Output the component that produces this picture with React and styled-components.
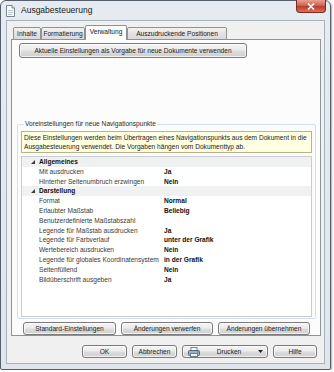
import React from 'react'
import styled, { createGlobalStyle } from 'styled-components'

const GlobalStyle = createGlobalStyle`
  html, body {
    margin: 0;
    padding: 0;
    background: #ffffff;
  }
  body {
    font-family: "Liberation Sans", Arial, sans-serif;
    color: #1b1b1b;
  }
`

const Window = styled.div`
  width: 331px;
  height: 370px;
  box-sizing: border-box;
  border: 1px solid #56606c;
  border-radius: 6px 6px 2px 2px;
  background: linear-gradient(#e6ebf1, #dfe5eb);
  display: flex;
  flex-direction: column;
  box-shadow: 1px 1px 2px rgba(0, 0, 0, 0.35);
`

const TitleBar = styled.div`
  height: 19px;
  flex: none;
  display: flex;
  align-items: flex-start;
`

const AppIcon = styled.svg`
  margin: 4px 0 0 4px;
  flex: none;
`

const Title = styled.div`
  margin: 4px 0 0 5px;
  font-size: 8.5px;
  line-height: 11px;
  color: #1a1a1a;
  flex: 1;
`

const CloseButton = styled.div`
  width: 30px;
  height: 13px;
  margin: -1px 4px 0 0;
  box-sizing: border-box;
  border: 1px solid #7a2a22;
  border-top: none;
  border-radius: 0 0 4px 4px;
  background: linear-gradient(#e6a294, #cf5a4a 50%, #b93a2b 51%, #d9705c);
  display: flex;
  align-items: center;
  justify-content: center;
`

const Client = styled.div`
  flex: 1;
  margin: 0 5px 5px;
  border: 1px solid #a8b2bd;
  background: #f0f0f0;
  display: flex;
  flex-direction: column;
  padding: 4px 3px 0 4px;
`

const TabStrip = styled.div`
  display: flex;
  align-items: flex-end;
  height: 14px;
  padding-left: 2px;
  position: relative;
  z-index: 1;
`

const Tab = styled.div`
  width: ${p => p.$w}px;
  height: ${p => (p.$active ? 15 : 13)}px;
  box-sizing: border-box;
  margin-bottom: -1px;
  border: 1px solid #8e939b;
  border-bottom: ${p => (p.$active ? 'none' : '1px solid #8e939b')};
  border-radius: 2px 2px 0 0;
  background: ${p => (p.$active ? '#fcfcfc' : 'linear-gradient(#f3f3f3, #e3e3e3 50%, #d9d9d9)')};
  font-size: 6.6px;
  line-height: 11px;
  text-align: center;
  white-space: nowrap;
  color: #1b1b1b;
`

const Panel = styled.div`
  height: 297px;
  flex: none;
  box-sizing: border-box;
  border: 1px solid #8e939b;
  background: #fcfcfc;
  display: flex;
  flex-direction: column;
  padding-top: 3px;
`

const Button = styled.div`
  width: ${p => p.$w}px;
  height: ${p => p.$h || 13}px;
  box-sizing: border-box;
  border: 1px solid #7b7b7b;
  border-radius: 3px;
  background: linear-gradient(#f4f4f4, #ebebeb 48%, #dddddd 52%, #cfcfcf);
  box-shadow: inset 0 0 0 1px rgba(255, 255, 255, 0.7);
  font-size: 6.6px;
  line-height: ${p => (p.$h || 13) - 2}px;
  text-align: center;
  white-space: nowrap;
  color: #1b1b1b;
  flex: none;
`

const TopButton = styled(Button)`
  margin-left: 7px;
`

const Group = styled.fieldset`
  margin: 62px 4px 0 5px;
  padding: 0 3px 1px;
  border: 1px solid #d5dfe5;
  border-radius: 2px;
  min-width: 0;
`

const GroupLabel = styled.legend`
  margin-left: 3px;
  padding: 0 1px;
  font-size: 6.6px;
  line-height: 8px;
  color: #2a2a2a;
`

const InfoBox = styled.div`
  margin-top: 3px;
  border: 1px solid #b9b38a;
  background: #ffffe1;
  padding: 1px 2px;
  font-size: 6.6px;
  line-height: 9px;
  color: #1b1b1b;
  white-space: nowrap;
`

const Grid = styled.div`
  margin-top: 3px;
  height: 161px;
  box-sizing: border-box;
  border: 1px solid #c9ccd1;
  background: #ffffff;
`

const Row = styled.div`
  display: grid;
  grid-template-columns: 17px 125px 1fr;
  height: 9.8px;
  align-items: center;
  background: ${p => (p.$cat ? '#f0f1f3' : 'transparent')};
  font-size: 6.6px;
  line-height: 9.8px;
  white-space: nowrap;
`

const Expander = styled.svg`
  justify-self: end;
  margin-right: 4px;
`

const Name = styled.span`
  font-weight: ${p => (p.$cat ? 700 : 400)};
  color: ${p => (p.$cat ? '#111' : '#3a3a3a')};
`

const Value = styled.span`
  font-weight: 700;
  color: #111;
`

const ActionRow = styled.div`
  display: flex;
  gap: 5px;
  margin: 3px 0 0 11px;
`

const Footer = styled.div`
  display: flex;
  gap: 5px;
  justify-content: flex-end;
  margin-top: 9px;
  padding-right: 4px;
`

const SplitButton = styled(Button)`
  display: flex;
  align-items: center;
  padding: 0 4px 0 5px;
`

const SplitLabel = styled.span`
  flex: 1;
  text-align: center;
`

const tabs = [
  { label: 'Inhalte', w: 28 },
  { label: 'Formatierung', w: 44 },
  { label: 'Verwaltung', w: 42, active: true },
  { label: 'Auszudruckende Positionen', w: 100 },
]

const rows = [
  { cat: true, name: 'Allgemeines' },
  { name: 'Mit ausdrucken', value: 'Ja' },
  { name: 'Hinterher Seitenumbruch erzwingen', value: 'Nein' },
  { cat: true, name: 'Darstellung' },
  { name: 'Format', value: 'Normal' },
  { name: 'Erlaubter Maßstab', value: 'Beliebig' },
  { name: 'Benutzerdefinierte Maßstabszahl', value: '' },
  { name: 'Legende für Maßstab ausdrucken', value: 'Ja' },
  { name: 'Legende für Farbverlauf', value: 'unter der Grafik' },
  { name: 'Wertebereich ausdrucken', value: 'Nein' },
  { name: 'Legende für globales Koordinatensystem', value: 'in der Grafik' },
  { name: 'Seitenfüllend', value: 'Nein' },
  { name: 'Bildüberschrift ausgeben', value: 'Ja' },
]

const DocIcon = () => (
  <AppIcon width="11" height="12" viewBox="0 0 11 12">
    <path d="M1.5 0.5 H7 L9.5 3 V11.5 H1.5 Z" fill="#fdfdfd" stroke="#7d8590" />
    <path d="M7 0.5 V3 H9.5" fill="#e3e6ea" stroke="#7d8590" />
    <path d="M3 5.5 H8 M3 7.5 H8 M3 9.5 H7" stroke="#b7c3d1" />
  </AppIcon>
)

const PrinterIcon = () => (
  <svg width="12" height="10" viewBox="0 0 12 10">
    <rect x="3" y="0.5" width="6" height="4" fill="#ffffff" stroke="#7a8794" />
    <rect x="0.5" y="3.5" width="11" height="5" rx="1" fill="#9fb1c6" stroke="#56687e" />
    <rect x="2.5" y="6.5" width="7" height="3" fill="#f4f6f8" stroke="#6f7e8f" />
    <rect x="9" y="4.5" width="1.5" height="1" fill="#3c9a3c" />
  </svg>
)

export default function App() {
  return (
    <>
      <GlobalStyle />
      <Window>
        <TitleBar>
          <DocIcon />
          <Title>Ausgabesteuerung</Title>
          <CloseButton>
            <svg width="8" height="7" viewBox="0 0 8 7">
              <path d="M1 0.5 L7 6.5 M7 0.5 L1 6.5" stroke="#ffffff" strokeWidth="1.6" />
            </svg>
          </CloseButton>
        </TitleBar>
        <Client>
          <TabStrip>
            {tabs.map(t => (
              <Tab key={t.label} $w={t.w} $active={t.active}>
                {t.label}
              </Tab>
            ))}
          </TabStrip>
          <Panel>
            <TopButton $w={228} $h={15}>
              Aktuelle Einstellungen als Vorgabe für neue Dokumente verwenden
            </TopButton>
            <Group>
              <GroupLabel>Voreinstellungen für neue Navigationspunkte</GroupLabel>
              <InfoBox>
                Diese Einstellungen werden beim Übertragen eines Navigationspunkts aus dem Dokument in die
                <br />
                Ausgabesteuerung verwendet. Die Vorgaben hängen vom Dokumenttyp ab.
              </InfoBox>
              <Grid>
                {rows.map(r => (
                  <Row key={r.name} $cat={r.cat}>
                    {r.cat ? (
                      <Expander width="4" height="4" viewBox="0 0 4 4">
                        <polygon points="4,0 4,4 0,4" fill="#3c3c3c" />
                      </Expander>
                    ) : (
                      <span />
                    )}
                    <Name $cat={r.cat}>{r.name}</Name>
                    <Value>{r.value}</Value>
                  </Row>
                ))}
              </Grid>
            </Group>
            <ActionRow>
              <Button $w={93}>Standard-Einstellungen</Button>
              <Button $w={92}>Änderungen verwerfen</Button>
              <Button $w={92}>Änderungen übernehmen</Button>
            </ActionRow>
          </Panel>
          <Footer>
            <Button $w={45}>OK</Button>
            <Button $w={45}>Abbrechen</Button>
            <SplitButton $w={86}>
              <PrinterIcon />
              <SplitLabel>Drucken</SplitLabel>
              <svg width="5" height="3" viewBox="0 0 5 3">
                <polygon points="0,0 5,0 2.5,3" fill="#222" />
              </svg>
            </SplitButton>
            <Button $w={44}>Hilfe</Button>
          </Footer>
        </Client>
      </Window>
    </>
  )
}
